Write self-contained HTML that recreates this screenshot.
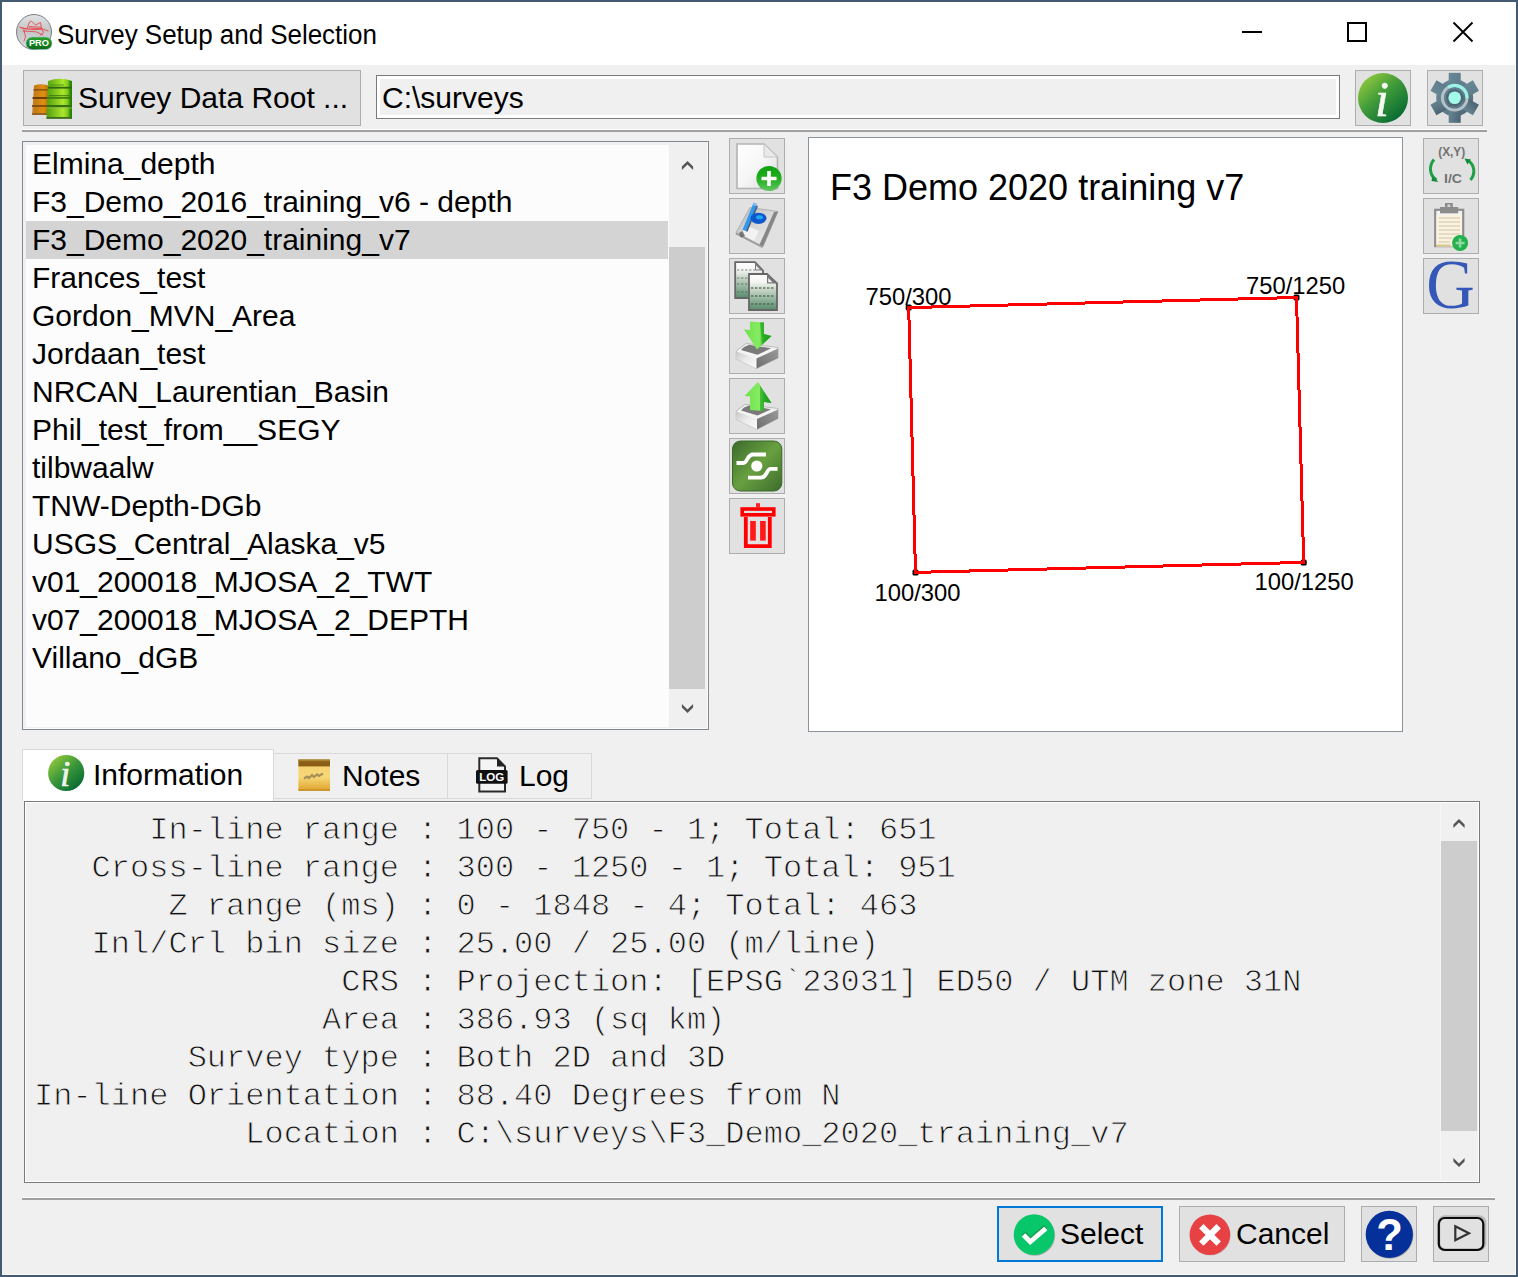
<!DOCTYPE html>
<html lang="en">
<head>
<meta charset="utf-8">
<title>Survey Setup and Selection</title>
<style>
*{box-sizing:border-box;margin:0;padding:0}
html,body{width:1518px;height:1277px;overflow:hidden;background:#435a70}
body{font-family:"Liberation Sans",sans-serif;color:#000;position:relative}
.abs{position:absolute}
#win{position:absolute;left:2px;top:2px;width:1514px;height:1273px;background:#f0f0f0}
#titlebar{position:absolute;left:2px;top:2px;width:1514px;height:63px;background:#fff}
#title{position:absolute;left:57px;top:18px;font-size:26px;line-height:34px;white-space:nowrap;letter-spacing:-.04px;transform:scaleY(1.075);transform-origin:0 25.700px}
.btn{position:absolute;background:#e1e1e1;border:1px solid #adadad}
.hr{position:absolute;height:3px;background:#a0a0a0;border-top:1px solid #fff}
#list{position:absolute;left:22px;top:141px;width:687px;height:589px;border:1px solid #7f8792;background:#f0f0f0;box-shadow:inset -1px -1px 0 #fbfbfb}
#listin{position:absolute;left:3px;top:3px;width:643px;height:582px;background:#fcfcfc}
.li{position:absolute;left:0;width:642px;height:38px;font-size:30px;line-height:38px;padding-left:6px;white-space:nowrap}
.li.sel{background:#d4d4d4}
.sb{position:absolute;background:#f0f0f0}
.thumb{position:absolute;background:#cdcdcd}
#map{position:absolute;left:808px;top:137px;width:595px;height:595px;border:1px solid #8c939c;background:#fff}
.tab{position:absolute;font-size:30px;white-space:nowrap}
#info{position:absolute;left:24px;top:801px;width:1456px;height:382px;border:1px solid #7a7a7a;background:#f0f0f0;box-shadow:inset 0 0 0 1px #fff}
#info pre{position:absolute;left:9px;top:10px;font-family:"Liberation Mono",monospace;font-size:32px;line-height:38px;color:#111;-webkit-text-stroke:0.9px #f0f0f0}
.lbl{position:absolute;font-size:30px;line-height:34px;white-space:nowrap}
</style>
</head>
<body>
<div id="win"></div>
<div id="titlebar"></div>
<div class="abs" style="left:1515px;top:65px;width:1px;height:1210px;background:#fafafa"></div>
<div class="abs" style="left:2px;top:1274px;width:1514px;height:1px;background:#fafafa"></div>
<div id="title">Survey Setup and Selection</div>

<svg class="abs" style="left:14px;top:12px" width="42" height="42" viewBox="14 12 42 42">
<defs>
<linearGradient id="gBall" x1="0" y1="0" x2="0" y2="1"><stop offset="0" stop-color="#e2e3e4"/><stop offset=".45" stop-color="#c3c5c7"/><stop offset="1" stop-color="#d9dadb"/></linearGradient>
<linearGradient id="gPro" x1="0" y1="0" x2="0" y2="1"><stop offset="0" stop-color="#2ba32b"/><stop offset="1" stop-color="#0b6a14"/></linearGradient>
</defs>
<circle cx="34" cy="32" r="17.5" fill="url(#gBall)" stroke="#7d7f82" stroke-width="1"/>
<path d="M19.5 27 L27 29 L29.5 22 L31.5 21.2 L35.5 25 L40.5 22.5 L41.5 28.5 L48 31 M22 28.5 L33 29.5 L42 29.2 L43.5 32.5 L40 35.5 M23 31 L36 31.8 L43 35 M24 30 L25.5 37 L24 41 M29.5 26.5 L41 27.3 M29 28 L41.5 28.8" fill="none" stroke="#ee3a3f" stroke-width="0.9" stroke-linejoin="round" stroke-linecap="round" opacity=".9"/>
<rect x="26" y="37" width="26" height="12.5" rx="6.2" fill="url(#gPro)" stroke="#9cc4e0" stroke-width=".5"/>
<text x="39" y="46.300" font-family="Liberation Sans, sans-serif" font-weight="700" font-size="9.300" fill="#fff" text-anchor="middle">PRO</text>
</svg>
<svg class="abs" style="left:1230px;top:15px" width="260" height="36" viewBox="1230 15 260 36">
<rect x="1242" y="31" width="20" height="2" fill="#000"/>
<rect x="1348" y="23" width="18" height="18" fill="none" stroke="#000" stroke-width="2"/>
<path d="M1453.5 22.5 L1472.5 41.5 M1472.5 22.5 L1453.5 41.5" stroke="#000" stroke-width="1.9" fill="none"/>
</svg>
<!-- top row -->
<div class="btn" style="left:23px;top:70px;width:338px;height:56px"></div>
<div class="lbl" style="left:78px;top:81px">Survey Data Root ...</div>
<div class="abs" style="left:376px;top:75px;width:964px;height:44px;border:1px solid #7a7a7a;background:#fff"><div style="position:absolute;left:3px;top:3px;right:3px;bottom:3px;background:#f0f0f0"></div></div>
<div class="lbl" style="left:382px;top:81px">C:\surveys</div>
<div class="btn" style="left:1355px;top:70px;width:56px;height:56px"></div>
<div class="btn" style="left:1427px;top:70px;width:56px;height:56px"></div>
<div class="hr" style="left:22px;top:129px;width:1465px"></div>

<svg class="abs" style="left:28px;top:74px" width="50" height="50" viewBox="28 74 50 50">
<defs>
<linearGradient id="gOr" x1="0" y1="0" x2="1" y2="0"><stop offset="0" stop-color="#c98a3c"/><stop offset=".2" stop-color="#c47a14"/><stop offset=".7" stop-color="#e08f12"/><stop offset="1" stop-color="#c27608"/></linearGradient>
<linearGradient id="gGr" x1="0" y1="0" x2="1" y2="0"><stop offset="0" stop-color="#4da010"/><stop offset=".25" stop-color="#74b818"/><stop offset=".65" stop-color="#ace82c"/><stop offset=".85" stop-color="#7cc416"/><stop offset=".9" stop-color="#3f9a0c"/><stop offset="1" stop-color="#1f7a08"/></linearGradient>
</defs>
<path d="M34 85.5 Q41 83 48 85.5 L48 115 L32 115 Z" fill="url(#gOr)"/>
<rect x="33.5" y="89" width="15" height="1.6" fill="#7a4a12" opacity=".8"/>
<rect x="32.5" y="97" width="16" height="2" fill="#6b3f10"/>
<rect x="32" y="105" width="16" height="2" fill="#7a4a12" opacity=".9"/>
<rect x="32" y="113" width="16" height="2" fill="#8a5a28" opacity=".8"/>
<path d="M48 81 Q60 76.500 72 81 L72 118.500 L46.500 118.500 Z" fill="url(#gGr)"/>
<rect x="48" y="86.800" width="24" height="1.800" fill="#2f6b0e"/>
<rect x="50" y="84.500" width="14" height="1" fill="#3d8a12" opacity=".8"/>
<rect x="47.500" y="96.800" width="24.500" height="2" fill="#3a7510" opacity=".9"/>
<rect x="49" y="95" width="20" height="1" fill="#2f6b0e" opacity=".7"/>
<rect x="47" y="105" width="25" height="2.200" fill="#34700f"/>
<rect x="47" y="107.500" width="25" height="1" fill="#9cc060" opacity=".7"/>
<rect x="46.500" y="117" width="25.500" height="1.800" fill="#3c6c24"/>
</svg>
<svg class="abs" style="left:1356px;top:71px" width="54" height="54" viewBox="1356 71 54 54">
<defs><linearGradient id="gInfo" x1=".15" y1=".1" x2=".85" y2=".9"><stop offset="0" stop-color="#8cc63c"/><stop offset=".45" stop-color="#3f9a3a"/><stop offset="1" stop-color="#066a32"/></linearGradient></defs>
<circle cx="1383" cy="98" r="25" fill="url(#gInfo)"/>
<text x="1382" y="115.500" font-family="Liberation Serif, serif" font-style="italic" font-size="50" fill="#f4f8f0" stroke="#f4f8f0" stroke-width=".6" text-anchor="middle">i</text>
</svg>
<svg class="abs" style="left:1428px;top:71px" width="54" height="54" viewBox="1428 71 54 54">
<defs><linearGradient id="gGear" x1="0" y1="0" x2="1" y2="1"><stop offset="0" stop-color="#688898"/><stop offset=".55" stop-color="#607d8b"/><stop offset="1" stop-color="#4a6170"/></linearGradient></defs>
<g transform="translate(1454.700 97.800)">
<g fill="url(#gGear)">
<circle r="18.500"/>
<rect x="-6" y="-25" width="12" height="50"/>
<rect x="-6" y="-24.500" width="12" height="49" transform="rotate(60)"/>
<rect x="-6" y="-24.500" width="12" height="49" transform="rotate(-60)"/>
</g>
<circle r="12.300" fill="none" stroke="#b4c2ca" stroke-width="3"/>
<path d="M-6.500 -10.500 A12.300 12.300 0 0 1 12.300 0.500" fill="none" stroke="#98f4e6" stroke-width="3.200"/>
<circle r="8.600" fill="#4f6774"/>
<circle r="6.300" fill="#a4fbe9"/>
</g>
</svg>
<!-- list -->
<div id="list">
<div id="listin">
<div class="li" style="top:0px">Elmina_depth</div>
<div class="li" style="top:38px">F3_Demo_2016_training_v6 - depth</div>
<div class="li sel" style="top:76px">F3_Demo_2020_training_v7</div>
<div class="li" style="top:114px">Frances_test</div>
<div class="li" style="top:152px">Gordon_MVN_Area</div>
<div class="li" style="top:190px">Jordaan_test</div>
<div class="li" style="top:228px">NRCAN_Laurentian_Basin</div>
<div class="li" style="top:266px">Phil_test_from__SEGY</div>
<div class="li" style="top:304px">tilbwaalw</div>
<div class="li" style="top:342px">TNW-Depth-DGb</div>
<div class="li" style="top:380px">USGS_Central_Alaska_v5</div>
<div class="li" style="top:418px">v01_200018_MJOSA_2_TWT</div>
<div class="li" style="top:456px">v07_200018_MJOSA_2_DEPTH</div>
<div class="li" style="top:494px">Villano_dGB</div>
</div>
<div class="thumb" style="left:646px;top:105px;width:36px;height:442px"></div>
<svg class="abs" style="left:654px;top:16px" width="20" height="16" viewBox="0 0 20 16"><polygon points="4.900,8.400 10.500,2.900 16.100,8.400 16.100,12 10.500,6.500 4.900,12" fill="#555"/></svg>
<svg class="abs" style="left:654px;top:558px" width="20" height="16" viewBox="0 0 20 16"><polygon points="4.900,7.500 10.500,13 16.100,7.500 16.100,3.900 10.500,9.400 4.900,3.900" fill="#555"/></svg>
</div>

<!-- middle buttons -->
<div class="btn" style="left:729px;top:138px;width:56px;height:56px"></div>
<div class="btn" style="left:729px;top:198px;width:56px;height:56px"></div>
<div class="btn" style="left:729px;top:258px;width:56px;height:56px"></div>
<div class="btn" style="left:729px;top:318px;width:56px;height:56px"></div>
<div class="btn" style="left:729px;top:378px;width:56px;height:56px"></div>
<div class="btn" style="left:729px;top:438px;width:56px;height:56px"></div>
<div class="btn" style="left:729px;top:498px;width:56px;height:56px"></div>

<!-- middle icons -->
<svg class="abs" style="left:730px;top:139px" width="54" height="414" viewBox="730 139 54 414">
<defs>
<linearGradient id="gPage" x1="0" y1="0" x2="1" y2="1"><stop offset="0" stop-color="#fff"/><stop offset=".5" stop-color="#f6f6f6"/><stop offset="1" stop-color="#d8d8d8"/></linearGradient>
<linearGradient id="gPlus" x1="0" y1="0" x2="0" y2="1"><stop offset="0" stop-color="#0fa00f"/><stop offset=".5" stop-color="#1eae1e"/><stop offset="1" stop-color="#62c662"/></linearGradient>
<linearGradient id="gDoc" x1="0" y1="0" x2="0" y2="1"><stop offset="0" stop-color="#fff"/><stop offset=".22" stop-color="#f4f6f2"/><stop offset=".45" stop-color="#c4d4c4"/><stop offset="1" stop-color="#578c6c"/></linearGradient>
<linearGradient id="gArr" x1="0" y1="0" x2="1" y2="0"><stop offset="0" stop-color="#6fe04c"/><stop offset=".55" stop-color="#86ec62"/><stop offset=".75" stop-color="#2eb82a"/><stop offset="1" stop-color="#1aa01a"/></linearGradient>
<linearGradient id="gTrayL" x1="0" y1="0" x2="1" y2="1"><stop offset="0" stop-color="#c8c8c8"/><stop offset=".5" stop-color="#ececec"/><stop offset="1" stop-color="#fafafa"/></linearGradient>
<linearGradient id="gTrayR" x1="0" y1="1" x2="1" y2="0"><stop offset="0" stop-color="#6e6e6e"/><stop offset="1" stop-color="#9a9a9a"/></linearGradient>
<linearGradient id="gSq" x1="0" y1="0" x2="1" y2="1"><stop offset="0" stop-color="#3b6a2c"/><stop offset=".5" stop-color="#68a040"/><stop offset="1" stop-color="#3c6c2c"/></linearGradient>
<linearGradient id="gSheet" x1="0" y1="0" x2="1" y2="1"><stop offset="0" stop-color="#b4b4b4"/><stop offset=".45" stop-color="#d6d6d6"/><stop offset=".7" stop-color="#e4e4e4"/><stop offset="1" stop-color="#b0b0b0"/></linearGradient>
</defs>
<!-- 1 new -->
<path d="M737 144 L764 144 L777.500 157 L777.500 188.500 L737 188.500 Z" fill="url(#gPage)" stroke="#b4b4b4" stroke-width="1.600"/>
<path d="M764 144 L764 157 L777.500 157 Z" fill="#e9e9e9" stroke="#c6c6c6" stroke-width="1"/>
<circle cx="769" cy="178.500" r="12.600" fill="url(#gPlus)"/>
<path d="M769 171 V186 M761.500 178.500 H776.500" stroke="#fff" stroke-width="3.600"/>
<!-- 2 rename -->
<path d="M750 207.500 L778 211.500 L763 246.500 L736 232.500 Z" fill="url(#gSheet)" stroke="#a6a6a6" stroke-width=".8"/>
<path d="M778 211.500 L763 246.500 L759.500 244.800 L774 212 Z" fill="#868686"/>
<path d="M736 232.500 L763 246.500 L762.300 248 L735.500 234.200 Z" fill="#9c9c9c"/>
<path d="M746 225 L759 231 L754 241 L741.500 234.500 Z" fill="#f6f6f6" opacity=".85"/>
<path d="M739 233 L742.500 231 L745 236 L741 237.500 Z" fill="#5c5c5c" opacity=".8"/>
<path d="M755 205 L744.500 230.500" stroke="#2f98f0" stroke-width="4.200"/>
<path d="M757.300 205.800 L746.800 231.500" stroke="#4a5a6c" stroke-width="1.500"/>
<path d="M753.500 202.500 l3.500 1.200 l-1 2.500 l-3.500 -1.200 Z" fill="#7ab8f0"/>
<ellipse cx="758.500" cy="218.300" rx="8" ry="5.600" fill="#0f58cc"/>
<ellipse cx="759.500" cy="217.300" rx="3.500" ry="2" fill="#22a8f0"/>
<!-- 3 copy -->
<path d="M735.200 262.200 L755 262.200 L763 270.500 L763 298 L735.200 298 Z" fill="url(#gDoc)" stroke="#666" stroke-width="1.800"/>
<path d="M755 262.200 L755 270.500 L763 270.500 Z" fill="#7c7c7c"/><path d="M756 265.500 L756 269.500 L760 269.500 Z" fill="#eee"/>
<g stroke="#4d5f55" stroke-width="1.200" stroke-dasharray="2.500 1.500" opacity=".7"><path d="M737 270 H755 M737 278 H748 M737 284 H748 M737 292 H748"/></g>
<path d="M749 274 L767 274 L777 283.500 L777 310 L749 310 Z" fill="url(#gDoc)" stroke="#666" stroke-width="1.800"/>
<path d="M767 274 L767 283.500 L777 283.500 Z" fill="#777"/><path d="M768.200 278 L768.200 282.300 L772.500 282.300 Z" fill="#f2f2f2"/>
<g stroke="#44574c" stroke-width="1.300" stroke-dasharray="2.500 1.500" opacity=".75"><path d="M751 288 H775 M751 296 H775 M751 304 H775"/></g>
<!-- 4 import -->
<path d="M736.300 351 L746 343.500 L778 347.500 L778 358 L756.500 368.500 L736.300 359 Z" fill="#f4f4f4" stroke="#b4b4b4" stroke-width=".9"/>
<path d="M736.300 351.500 L756.500 358.500 L756.500 368.500 L736.300 359 Z" fill="url(#gTrayL)"/>
<path d="M756.500 358.500 L778 348.500 L778 358 L756.500 368.500 Z" fill="url(#gTrayR)"/>
<path d="M744 347 L749 344.800 L771 348.300 L757.500 354.800 L741 350 Z" fill="#7a7a7a"/>
<path d="M750 321.500 L764 322.500 L764 334 L771.500 336 L757 349.500 L744 329.500 L750 330 Z" fill="url(#gArr)"/>
<path d="M760 322.200 L764 322.500 L764 334 L771.500 336 L762 345 Z" fill="#1c9c1c" opacity=".55"/>
<!-- 5 export -->
<path d="M736.300 411 L745 404.500 L778 408.500 L778 418.500 L757 429.300 L736.300 419.500 Z" fill="#f4f4f4" stroke="#b4b4b4" stroke-width=".9"/>
<path d="M736.300 411.500 L757 419 L757 429.300 L736.300 419.500 Z" fill="url(#gTrayL)"/>
<path d="M757 419 L778 409.500 L778 418.500 L757 429.300 Z" fill="url(#gTrayR)"/>
<path d="M744 407.500 L749 405.500 L771 409.300 L757.500 415.500 L741 410.500 Z" fill="#7a7a7a"/>
<path d="M757.800 382 L771.500 403 L764 402 L763.700 411 L750 410 L750 396.500 L744.600 396 Z" fill="url(#gArr)"/>
<path d="M757.800 382 L771.500 403 L764 402 L763.700 411 L760 410.700 L760 386 Z" fill="#1c9c1c" opacity=".5"/>
<!-- 6 green square -->
<rect x="732.500" y="441" width="49.300" height="50" rx="8" fill="url(#gSq)" stroke="#3a6a2a" stroke-width="1"/>
<g fill="none" stroke="#fff" stroke-width="3.800">
<path d="M736.500 463 H743.500 C747.500 463 747 454.500 753 454.500 H766"/>
<path d="M777.500 468.800 H770.500 C766.500 468.800 767 477.600 761 477.600 H748"/>
</g>
<circle cx="756.800" cy="466" r="5.600" fill="#fff"/>
<!-- 7 trash -->
<g fill="none" stroke="#ff0000">
<rect x="742.200" y="509" width="31.600" height="5.800" stroke-width="3.600"/>
<path d="M745.800 517 L745.800 546.200 L769.800 546.200 L769.800 517" stroke-width="3.800"/>
</g>
<rect x="756" y="503.200" width="4" height="4.500" fill="#f22"/>
<rect x="750.200" y="521" width="5.600" height="19.600" fill="#ff1818"/>
<rect x="760.100" y="521" width="5.600" height="19.600" fill="#ff1818"/>
</svg>
<!-- map -->
<div id="map"></div>
<svg class="abs" style="left:809px;top:138px" width="593" height="593" viewBox="809 138 593 593">
<g fill="#000"><rect x="905.700" y="304.600" width="6" height="6" rx="1.500"/><rect x="1293.500" y="294.500" width="6" height="6" rx="1.500"/><rect x="1300.700" y="559.400" width="6" height="6" rx="1.500"/><rect x="912.500" y="569.400" width="6" height="6" rx="1.500"/></g>
<polygon points="908.7,307.6 1296.5,297.5 1303.7,562.4 915.5,572.4" fill="none" stroke="#ff0000" stroke-width="3" shape-rendering="crispEdges"/>
<g font-family="Liberation Sans, sans-serif" fill="#000">
<text x="830" y="199.500" font-size="36">F3 Demo 2020 training v7</text>
<g font-size="23.800">
<text x="865.500" y="305">750/300</text>
<text x="1246" y="294.300">750/1250</text>
<text x="874.500" y="601">100/300</text>
<text x="1254.500" y="589.500">100/1250</text>
</g></g>
</svg>

<!-- right buttons -->
<div class="btn" style="left:1423px;top:138px;width:56px;height:56px"></div>
<div class="btn" style="left:1423px;top:198px;width:56px;height:56px"></div>
<div class="btn" style="left:1423px;top:258px;width:56px;height:56px"></div>

<!-- right icons -->
<svg class="abs" style="left:1424px;top:139px" width="54" height="174" viewBox="1424 139 54 174">
<g font-family="Liberation Sans, sans-serif" font-weight="700" fill="#727272">
<text x="1451.700" y="155.500" font-size="12.500" text-anchor="middle" textLength="27" lengthAdjust="spacingAndGlyphs">(X,Y)</text>
<text x="1453" y="183" font-size="12.500" text-anchor="middle" textLength="18" lengthAdjust="spacingAndGlyphs">I/C</text>
</g>
<path d="M1434 159.500 C1428.500 166 1429.500 175.500 1436.500 180" fill="none" stroke="#1fa045" stroke-width="3"/>
<path d="M1432.500 176 L1438.500 182 L1431.500 181 Z" fill="#178a3a"/>
<path d="M1468 160.500 C1475 165 1475.500 174 1470.500 180" fill="none" stroke="#1fa045" stroke-width="3"/>
<path d="M1464.500 158.500 L1471 159.500 L1467.500 164.500 Z" fill="#178a3a"/>
<!-- clipboard -->
<rect x="1435.200" y="209.800" width="28" height="36.300" fill="#f2f2f2" stroke="#8e8e8e" stroke-width="2.200"/>
<rect x="1436.500" y="215" width="25.500" height="31.500" fill="#fbf3dd"/>
<g stroke="#dcd4bc" stroke-width="1.300"><path d="M1438.500 218 H1460 M1438.500 222 H1460 M1438.500 226 H1460 M1438.500 230 H1460 M1438.500 234 H1460 M1438.500 238 H1452 M1438.500 242 H1450"/></g>
<rect x="1436.500" y="244.500" width="14" height="2.200" fill="#d8c890"/>
<rect x="1440" y="207" width="18.200" height="6.300" fill="#8c8c8c"/>
<rect x="1445" y="203" width="7.800" height="5" fill="#8c8c8c"/>
<rect x="1447.500" y="204.500" width="2.800" height="2.500" fill="#d8d8d8"/>
<circle cx="1460.100" cy="243" r="8" fill="#22b14c"/>
<path d="M1460.100 238.500 V247.500 M1455.600 243 H1464.600" stroke="#8fd8a4" stroke-width="2.600"/>
<!-- G -->
<text x="1450.500" y="307.500" font-family="Liberation Serif, serif" font-size="69" fill="#3557b8" text-anchor="middle" textLength="48.500" lengthAdjust="spacingAndGlyphs">G</text>
</svg>
<!-- tabs -->
<div class="abs" style="left:22px;top:749px;width:252px;height:52px;background:#fff;border:1px solid #d9d9d9;border-bottom:none"></div>
<div class="abs" style="left:274px;top:753px;width:174px;height:46px;background:#f0f0f0;border:1px solid #d9d9d9;border-left:none"></div>
<div class="abs" style="left:448px;top:753px;width:144px;height:46px;background:#f0f0f0;border:1px solid #d9d9d9;border-left:none"></div>
<div class="lbl" style="left:93px;top:758px">Information</div>
<div class="lbl" style="left:342px;top:759px">Notes</div>
<div class="lbl" style="left:519px;top:759px">Log</div>

<!-- tab icons -->
<svg class="abs" style="left:46px;top:752px" width="470" height="44" viewBox="46 752 470 44">
<defs>
<linearGradient id="gInfo2" x1=".15" y1=".1" x2=".85" y2=".9"><stop offset="0" stop-color="#8cc63c"/><stop offset=".45" stop-color="#3f9a3a"/><stop offset="1" stop-color="#066a32"/></linearGradient>
<linearGradient id="gNote" x1="0" y1="0" x2="0" y2="1"><stop offset="0" stop-color="#f3cf6c"/><stop offset=".55" stop-color="#f7d878"/><stop offset="1" stop-color="#dea32c"/></linearGradient>
</defs>
<circle cx="66.200" cy="773" r="18.100" fill="url(#gInfo2)"/>
<text x="65.300" y="785.800" font-family="Liberation Serif, serif" font-style="italic" font-size="36" fill="#eef4ea" stroke="#eef4ea" stroke-width=".7" text-anchor="middle">i</text>
<rect x="298.400" y="759.600" width="31.600" height="31.200" fill="url(#gNote)"/>
<rect x="298.400" y="759.600" width="31.600" height="6.800" fill="#8b5e17"/>
<rect x="298.400" y="759.600" width="31.600" height="1.600" fill="#a9822f"/>
<path d="M304 778.500 l3 -2 l2 1.500 l3 -3 l2 2 l3 -2.500 l2 1.500 l4 -2.500" fill="none" stroke="#9a8450" stroke-width="2.200" opacity=".85"/>
<rect x="298.400" y="789.300" width="31.600" height="1.500" fill="#c98f22"/>
<path d="M479.300 758.300 L497 758.300 L505 766.500 L505 791.600 L479.300 791.600 Z" fill="#f4f4f4" stroke="#2a2a2a" stroke-width="2"/>
<path d="M497 758.300 L497 766.500 L505 766.500 Z" fill="#222"/>
<rect x="476" y="770" width="31.600" height="13.800" rx="1.500" fill="#111"/>
<text x="491.800" y="781.300" font-family="Liberation Sans, sans-serif" font-weight="700" font-size="11" fill="#fff" text-anchor="middle" textLength="25" lengthAdjust="spacingAndGlyphs">LOG</text>
</svg>
<!-- info -->
<div id="info"><pre>      In-line range : 100 - 750 - 1; Total: 651
   Cross-line range : 300 - 1250 - 1; Total: 951
       Z range (ms) : 0 - 1848 - 4; Total: 463
   Inl/Crl bin size : 25.00 / 25.00 (m/line)
                CRS : Projection: [EPSG`23031] ED50 / UTM zone 31N
               Area : 386.93 (sq km)
        Survey type : Both 2D and 3D
In-line Orientation : 88.40 Degrees from N
           Location : C:\surveys\F3_Demo_2020_training_v7</pre>
<div class="sb" style="left:1415px;top:1px;width:1px;height:378px;background:#f6f6f6"></div>
<div class="thumb" style="left:1416px;top:39px;width:36px;height:290px"></div>
<svg class="abs" style="left:1424px;top:13px" width="20" height="16" viewBox="0 0 20 16"><polygon points="4.400,9.400 10,3.900 15.600,9.400 15.600,13 10,7.500 4.400,13" fill="#555"/></svg>
<svg class="abs" style="left:1424px;top:352px" width="20" height="16" viewBox="0 0 20 16"><polygon points="4.400,7.600 10,13.100 15.600,7.600 15.600,4 10,9.500 4.400,4" fill="#555"/></svg>
</div>

<!-- bottom -->
<div class="hr" style="left:22px;top:1197px;width:1473px"></div>
<div class="btn" style="left:997px;top:1206px;width:166px;height:56px;border:2px solid #0078d7"></div>
<div class="btn" style="left:1179px;top:1206px;width:166px;height:56px"></div>
<div class="btn" style="left:1361px;top:1206px;width:56px;height:56px"></div>
<div class="btn" style="left:1433px;top:1206px;width:56px;height:56px"></div>
<div class="lbl" style="left:1060px;top:1217px">Select</div>
<div class="lbl" style="left:1236px;top:1217px">Cancel</div>
<!-- bottom icons -->
<svg class="abs" style="left:1010px;top:1208px" width="480" height="52" viewBox="1010 1208 480 52">
<circle cx="1034.800" cy="1235.400" r="20.300" fill="#555" opacity=".35"/>
<circle cx="1034.100" cy="1234.700" r="20.400" fill="#08c76a"/>
<path d="M1023.800 1233 L1030.600 1239.800 L1045.600 1226.600" fill="none" stroke="#2f7a4a" stroke-width="4.600" opacity=".55"/>
<path d="M1023.500 1235 L1030.300 1241.800 L1045.800 1228.500" fill="none" stroke="#fff" stroke-width="4.800"/>
<circle cx="1210.400" cy="1235.300" r="20.300" fill="#777" opacity=".25"/>
<circle cx="1209.900" cy="1234.700" r="20.300" fill="#e84144"/>
<path d="M1201.300 1226.300 L1218.700 1243.600 M1218.700 1226.300 L1201.300 1243.600" stroke="#fff" stroke-width="6.200"/>
<circle cx="1389.900" cy="1235.200" r="23.600" fill="#444" opacity=".3"/>
<circle cx="1389.300" cy="1234.400" r="23.600" fill="#05309a"/>
<text x="1389.600" y="1250.300" font-family="Liberation Sans, sans-serif" font-weight="700" font-size="43.500" fill="#fff" text-anchor="middle">?</text>
<rect x="1439" y="1216.500" width="46" height="33" rx="6" fill="none" stroke="#9a9a9a" stroke-width="2.500" opacity=".6"/>
<rect x="1438.800" y="1218" width="44.500" height="32" rx="6" fill="none" stroke="#0a0a0a" stroke-width="2.200"/>
<path d="M1455.300 1226.300 L1469 1233.300 L1455.300 1240.300 Z" fill="none" stroke="#333" stroke-width="2.200" stroke-linejoin="miter"/>
</svg>
</body>
</html>
